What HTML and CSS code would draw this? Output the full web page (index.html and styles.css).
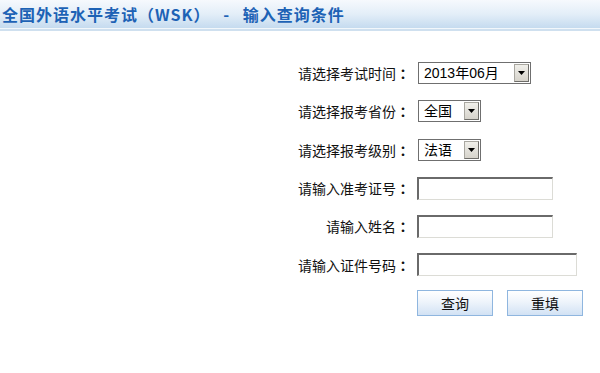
FILE: index.html
```html
<!DOCTYPE html>
<html lang="zh-CN">
<head>
<meta charset="utf-8">
<title>全国外语水平考试（WSK） - 输入查询条件</title>
<link rel="stylesheet" href="styles.css">
</head>
<body>
<div class="header">
  <h1 class="title">全国外语水平考试（WSK） - 输入查询条件</h1>
</div>
<form class="form">
  <label class="lbl">请选择考试时间<span class="colon">：</span></label>
  <div class="ctl">
    <div class="select sel-wide"><span class="val">2013年06月</span><span class="arrow"><svg width="7" height="4" viewBox="0 0 7 4"><path d="M0 0H7L3.5 4Z" fill="#000"/></svg></span></div>
  </div>
  <label class="lbl">请选择报考省份<span class="colon">：</span></label>
  <div class="ctl">
    <div class="select sel-short"><span class="val">全国</span><span class="arrow"><svg width="7" height="4" viewBox="0 0 7 4"><path d="M0 0H7L3.5 4Z" fill="#000"/></svg></span></div>
  </div>
  <label class="lbl">请选择报考级别<span class="colon">：</span></label>
  <div class="ctl">
    <div class="select sel-short"><span class="val">法语</span><span class="arrow"><svg width="7" height="4" viewBox="0 0 7 4"><path d="M0 0H7L3.5 4Z" fill="#000"/></svg></span></div>
  </div>
  <label class="lbl">请输入准考证号<span class="colon">：</span></label>
  <div class="ctl"><input class="txt" type="text"></div>
  <label class="lbl">请输入姓名<span class="colon">：</span></label>
  <div class="ctl"><input class="txt" type="text"></div>
  <label class="lbl">请输入证件号码<span class="colon">：</span></label>
  <div class="ctl"><input class="txt txt-long" type="text"></div>
  <div class="lbl"></div>
  <div class="ctl btns">
    <button class="btn" type="button">查询</button>
    <button class="btn" type="button">重填</button>
  </div>
</form>
</body>
</html>
```

FILE: styles.css
```css
html, body {
  margin: 0;
  padding: 0;
  background: #fff;
}
body {
  width: 600px;
  height: 373px;
  overflow: hidden;
  font-family: "Liberation Sans", "Noto Sans CJK SC", sans-serif;
}
.header {
  height: 28px;
  background: linear-gradient(to bottom, #f6f9fd 0%, #e3eef8 50%, #c5dbef 100%);
  border-bottom: 1px solid #f2f7fb;
  box-shadow: 0 2px 0 #cfe0ef;
  display: flex;
  align-items: center;
}
.title {
  margin: 0 0 0 2px;
  font-family: "Noto Sans CJK SC", sans-serif;
  font-size: 16px;
  font-weight: bold;
  letter-spacing: 1px;
  word-spacing: 8px;
  color: #1d62b5;
  line-height: 20px;
  white-space: pre;
}
.form {
  margin-top: 25px;
  display: grid;
  grid-template-columns: 410px auto;
  grid-auto-rows: 38.3px;
  column-gap: 7px;
  align-items: center;
}
.lbl {
  font-family: "Noto Sans CJK SC", sans-serif;
  font-size: 14px;
  color: #111;
  text-align: right;
  line-height: 20px;
}
.colon {
  font-family: "Noto Sans CJK TC", "Noto Sans CJK SC", sans-serif;
  font-weight: bold;
  display: inline-block;
  width: 14px;
  text-align: center;
}
.ctl {
  display: flex;
  align-items: center;
}
.select {
  box-sizing: border-box;
  height: 22px;
  margin-left: 1px;
  border: 1px solid #6f6f6f;
  background: #fff;
  display: flex;
  align-items: center;
  justify-content: space-between;
  padding: 0 1px 0 5px;
}
.sel-wide { width: 113px; }
.sel-short { width: 63px; }
.val {
  font-family: "Liberation Sans", "Noto Sans CJK SC", sans-serif;
  font-size: 14px;
  color: #000;
  line-height: 18px;
}
.arrow {
  box-sizing: border-box;
  width: 15px;
  height: 18px;
  background: linear-gradient(to bottom, #f0efea, #d6d3cb);
  border: 1px solid #a9a7a0;
  border-right-color: #6e6d69;
  border-bottom-color: #6e6d69;
  display: flex;
  align-items: center;
  justify-content: center;
}
.txt {
  box-sizing: border-box;
  width: 136px;
  height: 23px;
  margin: 0;
  padding: 0 3px;
  background: #fff;
  border-top: 2px solid #6a6a6a;
  border-left: 2px solid #6a6a6a;
  border-right: 1px solid #dcdcd6;
  border-bottom: 1px solid #dcdcd6;
  outline: none;
  font-size: 14px;
}
.txt-long { width: 160px; }
.btns { gap: 14px; }
.btn {
  box-sizing: border-box;
  width: 76px;
  height: 26px;
  margin: 0;
  padding: 0;
  border: 1px solid #8fb6df;
  background: linear-gradient(to bottom, #ffffff 0%, #eef4fb 45%, #d2e2f4 100%);
  font-family: "Noto Sans CJK SC", sans-serif;
  font-size: 14px;
  color: #111;
  line-height: 22px;
  cursor: pointer;
}
```
